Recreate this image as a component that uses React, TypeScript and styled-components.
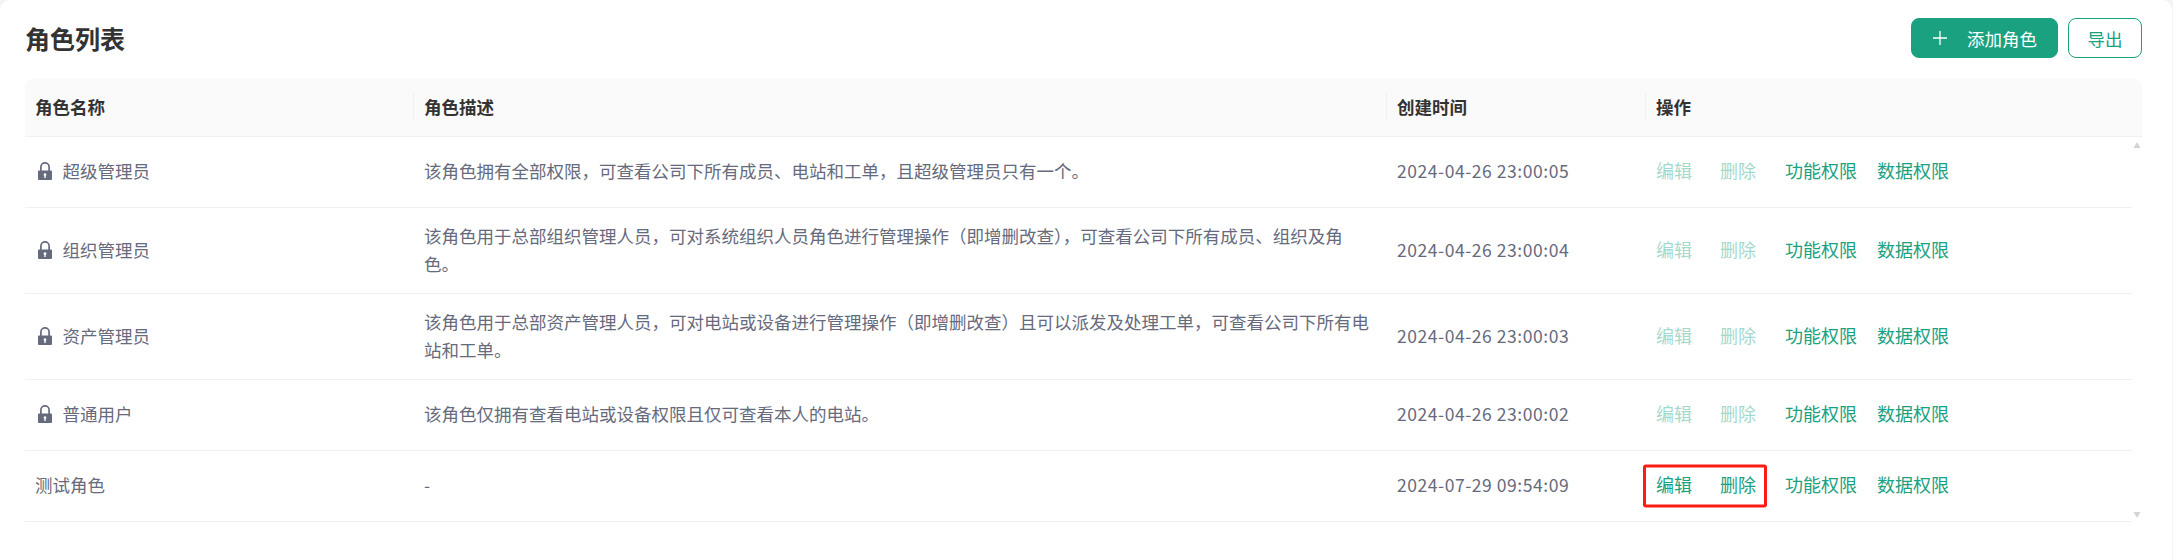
import * as React from "react";
import styled, { createGlobalStyle } from "styled-components";

const FONT = `"Noto Sans CJK SC", "Liberation Sans", sans-serif`;
const GREEN = "#1aa17f";

const GlobalStyle = createGlobalStyle`
	html, body {
		margin: 0;
		background: #f3f4f6;
		font-family: ${FONT};
	}
`;

const Page = styled.div`
	box-sizing: border-box;
	height: 560px;
	margin-right: 1px;
	padding: 18px 30px 0 25px;
	background: #fff;
	border-radius: 10px 10px 0 0;
`;

const TitleBar = styled.div`
	display: flex;
	align-items: center;
	justify-content: space-between;
	height: 40px;
	margin-bottom: 20px;
`;

const Title = styled.h1`
	margin: 0;
	font-size: 25px;
	line-height: 40px;
	font-weight: 700;
	color: #333;
`;

const Actions = styled.div`
	display: flex;
	gap: 10px;
`;

const Button = styled.button<{ $primary?: boolean }>`
	display: flex;
	align-items: center;
	justify-content: center;
	height: 40px;
	padding: 0 ${(p) => (p.$primary ? "20px" : "18.5px")};
	border: 1px solid ${GREEN};
	border-radius: 8px;
	font-family: ${FONT};
	font-size: 17.5px;
	color: ${(p) => (p.$primary ? "#fff" : GREEN)};
	background: ${(p) => (p.$primary ? GREEN : "#fff")};
`;

const PlusIcon = styled.svg`
	width: 16px;
	height: 16px;
	margin-right: 19px;
`;

const Table = styled.div`
	position: relative;
`;

const Row = styled.div<{ $head?: boolean }>`
	display: grid;
	grid-template-columns: 388px 973px 259px 1fr;
	align-items: center;
	box-sizing: border-box;
	min-height: ${(p) => (p.$head ? "59px" : "71px")};
	border-bottom: 1px solid #f0f0f0;
	margin-right: ${(p) => (p.$head ? "0" : "10px")};
	background: ${(p) => (p.$head ? "#fafafa" : "#fff")};
	border-radius: ${(p) => (p.$head ? "10px 10px 0 0" : "0")};
	font-size: 17.5px;
	line-height: 27.5px;
	color: ${(p) => (p.$head ? "#333" : "#666a7c")};
	font-weight: ${(p) => (p.$head ? 700 : 400)};
`;

const Cell = styled.div`
	padding: 14px 11px 16px 11px;
`;

const TimeCell = styled(Cell)`
	letter-spacing: 0.55px;
`;

const HeadCell = styled.div<{ $sep?: boolean }>`
	position: relative;
	padding: 0 ${(p) => (p.$sep ? "11px" : "10px")};

	${(p) =>
		p.$sep &&
		`&::before {
			content: "";
			position: absolute;
			left: 0;
			top: 50%;
			width: 1px;
			height: 28px;
			transform: translateY(-50%);
			background: #f0f0f0;
		}`}
`;

const NameCell = styled(Cell)`
	display: flex;
	align-items: center;
	gap: 11px;
	padding-left: 10px;
`;

const LockSvg = styled.svg`
	flex-shrink: 0;
	width: 14px;
	height: 18px;
	margin-left: 2.5px;
`;

const LinkRow = styled(Cell)`
	position: relative;
	display: flex;
	align-items: center;
`;

const Link = styled.a<{ $disabled?: boolean; $gap: number }>`
	margin-right: ${(p) => p.$gap}px;
	font-size: 18px;
	color: ${GREEN};
	opacity: ${(p) => (p.$disabled ? 0.4 : 1)};
`;

const Highlight = styled.div`
	position: absolute;
	left: -2px;
	top: 50%;
	box-sizing: border-box;
	width: 124px;
	height: 43px;
	transform: translateY(-50%);
	border: 3px solid #fb1d14;
	border-radius: 3px;
	pointer-events: none;
`;

const ScrollArrow = styled.svg<{ $down?: boolean }>`
	position: absolute;
	right: 1px;
	width: 8px;
	height: 6px;
	fill: #d4d4d4;
	top: ${(p) => (p.$down ? "434px" : "64px")};
	transform: ${(p) => (p.$down ? "rotate(180deg)" : "none")};
`;

function LockIcon() {
	return (
		<LockSvg viewBox="0 0 14 18">
			<path d="M2.900 9V5a4.100 4.100 0 0 1 8.200 0V9" fill="none" stroke="#666a7d" strokeWidth="1.700" />
			<path
				fillRule="evenodd"
				fill="#666a7d"
				d="M1 8.500h12a1 1 0 0 1 1 1V17a1 1 0 0 1-1 1H1a1 1 0 0 1-1-1V9.500a1 1 0 0 1 1-1zM7 11.200a1.400 1.400 0 0 0-.7 2.600V16h1.400v-2.200A1.400 1.400 0 0 0 7 11.200z"
			/>
		</LockSvg>
	);
}

const ROLES = [
	{
		name: "超级管理员",
		locked: true,
		desc: "该角色拥有全部权限，可查看公司下所有成员、电站和工单，且超级管理员只有一个。",
		time: "2024-04-26 23:00:05",
	},
	{
		name: "组织管理员",
		locked: true,
		desc: "该角色用于总部组织管理人员，可对系统组织人员角色进行管理操作（即增删改查），可查看公司下所有成员、组织及角色。",
		time: "2024-04-26 23:00:04",
	},
	{
		name: "资产管理员",
		locked: true,
		desc: "该角色用于总部资产管理人员，可对电站或设备进行管理操作（即增删改查）且可以派发及处理工单，可查看公司下所有电站和工单。",
		time: "2024-04-26 23:00:03",
	},
	{
		name: "普通用户",
		locked: true,
		desc: "该角色仅拥有查看电站或设备权限且仅可查看本人的电站。",
		time: "2024-04-26 23:00:02",
	},
	{ name: "测试角色", locked: false, desc: "-", time: "2024-07-29 09:54:09" },
];

export default function App() {
	return (
		<Page>
			<GlobalStyle />
			<TitleBar>
				<Title>角色列表</Title>
				<Actions>
					<Button $primary>
						<PlusIcon viewBox="0 0 16 16">
							<path d="M8 1v14M1 8h14" stroke="#fff" strokeWidth="1.300" />
						</PlusIcon>
						添加角色
					</Button>
					<Button>导出</Button>
				</Actions>
			</TitleBar>
			<Table>
				<Row $head>
					<HeadCell>角色名称</HeadCell>
					<HeadCell $sep>角色描述</HeadCell>
					<HeadCell $sep>创建时间</HeadCell>
					<HeadCell $sep>操作</HeadCell>
				</Row>
				{ROLES.map((role) => (
					<Row key={role.name}>
						<NameCell>
							{role.locked && <LockIcon />}
							{role.name}
						</NameCell>
						<Cell>{role.desc}</Cell>
						<TimeCell>{role.time}</TimeCell>
						<LinkRow>
							<Link $disabled={role.locked} $gap={28}>编辑</Link>
							<Link $disabled={role.locked} $gap={29}>删除</Link>
							<Link $gap={20}>功能权限</Link>
							<Link $gap={0}>数据权限</Link>
							{!role.locked && <Highlight />}
						</LinkRow>
					</Row>
				))}
				<ScrollArrow viewBox="0 0 8 6">
					<path d="M4 0l3.500 6H.5z" />
				</ScrollArrow>
				<ScrollArrow $down viewBox="0 0 8 6">
					<path d="M4 0l3.500 6H.5z" />
				</ScrollArrow>
			</Table>
		</Page>
	);
}
